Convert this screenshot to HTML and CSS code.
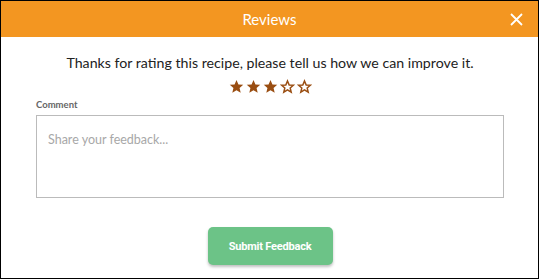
FILE: index.html
```html
<!DOCTYPE html>
<html>
<head>
<meta charset="utf-8">
<link rel="stylesheet" href="styles.css">
</head>
<body>
<div class="modal">
  <div class="header">
    <span class="title">Reviews</span>
    <svg class="close" width="13" height="13" viewBox="0 0 13 13"><path d="M1 1L12 12M12 1L1 12" stroke="#fff" stroke-width="1.8" fill="none"/></svg>
  </div>
  <div class="body">
    <p class="thanks">Thanks for rating this recipe, please tell us how we can improve it.</p>
    <div class="stars">
      <svg class="star" viewBox="0 0 24 24"><path class="full" d="M12 1.5l3.1 7.2 7.7.6-5.9 5.1 1.8 7.6L12 17.9 5.3 22l1.8-7.6L1.2 9.3l7.7-.6z"/></svg>
      <svg class="star" viewBox="0 0 24 24"><path class="full" d="M12 1.5l3.1 7.2 7.7.6-5.9 5.1 1.8 7.6L12 17.9 5.3 22l1.8-7.6L1.2 9.3l7.7-.6z"/></svg>
      <svg class="star" viewBox="0 0 24 24"><path class="full" d="M12 1.5l3.1 7.2 7.7.6-5.9 5.1 1.8 7.6L12 17.9 5.3 22l1.8-7.6L1.2 9.3l7.7-.6z"/></svg>
      <svg class="star" viewBox="0 0 24 24"><path class="empty" d="M12 3.2l2.7 6.3 6.7.5-5.1 4.4 1.6 6.6L12 17.5 6.1 21l1.6-6.6-5.1-4.4 6.7-.5z"/></svg>
      <svg class="star" viewBox="0 0 24 24"><path class="empty" d="M12 3.2l2.7 6.3 6.7.5-5.1 4.4 1.6 6.6L12 17.5 6.1 21l1.6-6.6-5.1-4.4 6.7-.5z"/></svg>
    </div>
    <label class="label">Comment</label>
    <textarea class="comment" placeholder="Share your feedback..."></textarea>
    <div class="actions">
      <button class="submit">Submit Feedback</button>
    </div>
  </div>
</div>
</body>
</html>
```
FILE: styles.css
```css
html, body { margin: 0; padding: 0; background: #fff; }
.modal {
  width: 539px;
  height: 279px;
  box-sizing: border-box;
  border: 1px solid #000;
  font-family: Lato, "Liberation Sans", sans-serif;
  display: flex;
  flex-direction: column;
}
.header {
  height: 36px;
  background: #f39621;
  display: flex;
  align-items: center;
  justify-content: center;
  position: relative;
}
.title { color: #fff; font-size: 15px; }
.close { position: absolute; right: 15px; top: 12px; }
.body {
  padding: 0 34px 0 35px;
  display: flex;
  flex-direction: column;
}
.thanks {
  margin: 17px 0 0;
  text-align: center;
  font-size: 14.2px;
  color: #222;
  line-height: 18px;
}
.stars {
  margin-top: 7px;
  display: flex;
  justify-content: center;
  gap: 2px;
  height: 15px;
}
.star { width: 15px; height: 15px; display: block; }
.full { fill: #9a4e12; }
.empty { fill: none; stroke: #9a4e12; stroke-width: 2.4; stroke-linejoin: miter; }
.label {
  margin-top: 5px;
  font-size: 9.5px;
  font-weight: bold;
  color: #666;
  line-height: 12px;
}
.comment {
  margin-top: 4px;
  height: 83px;
  box-sizing: border-box;
  border: 1px solid #bbb;
  resize: none;
  font-family: Lato, "Liberation Sans", sans-serif;
  font-size: 12.5px;
  padding: 16px 11px;
  outline: none;
}
.comment::placeholder { color: #a8a8a8; }
.actions {
  display: flex;
  justify-content: center;
  margin-top: 29px;
}
.submit {
  width: 125px;
  height: 38px;
  border: none;
  border-radius: 5px;
  background: #6cc387;
  color: #fff;
  font-family: Roboto, sans-serif;
  font-weight: bold;
  font-size: 11px;
  box-shadow: 0 2px 3px rgba(0,0,0,0.25);
  letter-spacing: -0.2px;
}
```
